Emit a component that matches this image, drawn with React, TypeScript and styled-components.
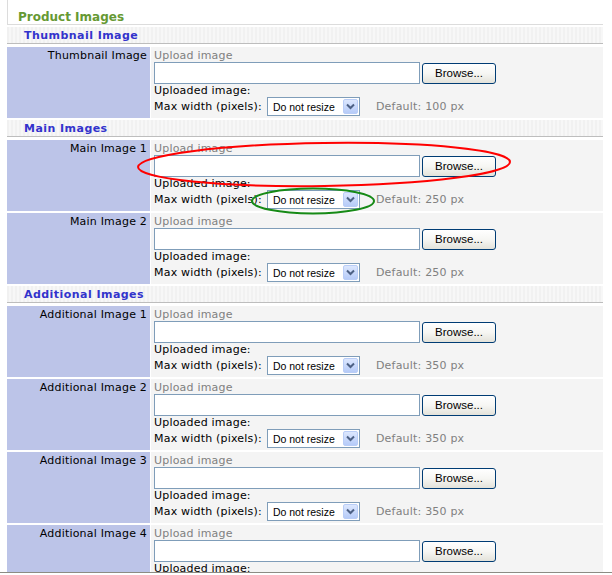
import styled, { createGlobalStyle } from 'styled-components';

const GlobalStyle = createGlobalStyle`
  html, body {
    margin: 0;
    padding: 0;
    background: #ffffff;
    overflow: hidden;
  }
  body {
    font-family: "DejaVu Sans", Verdana, sans-serif;
    font-size: 11px;
    letter-spacing: 0.2px;
    color: #000000;
  }
`;

interface IRow {
  label: string;
  defaultWidth: number;
}

interface ISection {
  title: string;
  rows: IRow[];
}

const sections: ISection[] = [
  {
    title: 'Thumbnail Image',
    rows: [{ label: 'Thumbnail Image', defaultWidth: 100 }],
  },
  {
    title: 'Main Images',
    rows: [
      { label: 'Main Image 1', defaultWidth: 250 },
      { label: 'Main Image 2', defaultWidth: 250 },
    ],
  },
  {
    title: 'Additional Images',
    rows: [1, 2, 3, 4].map((n) => ({
      label: `Additional Image ${n}`,
      defaultWidth: 350,
    })),
  },
];

const Root = styled.div`
  position: relative;
  width: 612px;
  height: 575px;
`;

const Page = styled.div`
  width: 596px;
  margin-left: 7px;
  display: flex;
  flex-direction: column;
  gap: 2px;
`;

const PageTitle = styled.div`
  border-left: 1px solid #dcdcdc;
  border-bottom: 1px solid #dcdcdc;
  padding: 10px 0 0 10px;
  line-height: 14px;
  font-size: 12px;
  letter-spacing: 0;
  font-weight: bold;
  color: #669933;
`;

const SectionHead = styled.div`
  margin-bottom: 1px;
  padding: 2px 0 0 17px;
  line-height: 14px;
  font-weight: bold;
  letter-spacing: 0.45px;
  color: #3333cc;
  border-bottom: 1px solid #bdbdbd;
  background: repeating-linear-gradient(
    90deg,
    #f1f1f1 0px,
    #f1f1f1 2px,
    #f7f7f7 2px,
    #f7f7f7 4px
  );
`;

const Row = styled.div`
  display: grid;
  grid-template-columns: 143px 1fr;
  column-gap: 1px;
`;

const Label = styled.div`
  background: #bcc4e8;
  text-align: right;
  padding: 2px 3px 0 0;
  line-height: 13px;
  white-space: nowrap;
`;

const Field = styled.div`
  background: #f4f4f4;
  padding: 2px 3px;
  display: flex;
  flex-direction: column;
`;

const Line = styled.div<{ $muted?: boolean }>`
  line-height: 13px;
  color: ${(p) => (p.$muted ? '#808080' : '#000000')};
  white-space: nowrap;
`;

const FileLine = styled.div`
  display: flex;
  align-items: center;
  gap: 2px;
  height: 22px;
`;

const FileBox = styled.div`
  box-sizing: border-box;
  width: 266px;
  height: 22px;
  background: #ffffff;
  border: 1px solid #7f9db9;
`;

const BrowseButton = styled.button`
  box-sizing: border-box;
  width: 74px;
  height: 21px;
  padding: 0;
  border: 1px solid #003c74;
  border-radius: 3px;
  background: linear-gradient(#ffffff 0%, #f6f6f3 50%, #e3e2da 100%);
  font-family: "Liberation Sans", Arial, sans-serif;
  font-size: 11.5px;
  letter-spacing: 0;
  color: #000000;
`;

const SizeLine = styled.div`
  display: flex;
  align-items: center;
  height: 19px;
  white-space: nowrap;
`;

const Select = styled.div`
  box-sizing: border-box;
  width: 93px;
  height: 19px;
  margin-left: 5px;
  border: 1px solid #7f9db9;
  background: #ffffff;
  display: flex;
  align-items: center;
  justify-content: space-between;
  padding: 0 1px 0 5px;
  font-family: "Liberation Sans", Arial, sans-serif;
  font-size: 10.5px;
  letter-spacing: 0;
`;

const DropArrow = styled.span`
  display: flex;
  align-items: center;
  justify-content: center;
  width: 15px;
  height: 15px;
  border-radius: 2px;
  background: linear-gradient(#dce7fe, #b6cbf8);
  border: 1px solid #b9cdf7;
  box-sizing: border-box;
`;

const DefaultNote = styled.span`
  margin-left: 16px;
  color: #808080;
`;

const Overlay = styled.svg`
  position: absolute;
  left: 0;
  top: 0;
  pointer-events: none;
`;

const StatusEdge = styled.div`
  position: fixed;
  left: 0;
  right: 0;
  top: 572px;
  height: 3px;
  border-top: 1px solid #8c8c84;
  background: #ffffff;
  box-sizing: border-box;
`;

const ImageRow = ({ row }: { row: IRow }) => (
  <Row>
    <Label>{row.label}</Label>
    <Field>
      <Line $muted>Upload image</Line>
      <FileLine>
        <FileBox />
        <BrowseButton>Browse...</BrowseButton>
      </FileLine>
      <Line>Uploaded image:</Line>
      <SizeLine>
        Max width (pixels):
        <Select>
          <span>Do not resize</span>
          <DropArrow>
            <svg width="9" height="7" viewBox="0 0 9 7">
              <path
                d="M1 1.5 L4.5 5 L8 1.5"
                fill="none"
                stroke="#4d6185"
                strokeWidth="2"
              />
            </svg>
          </DropArrow>
        </Select>
        <DefaultNote>Default: {row.defaultWidth} px</DefaultNote>
      </SizeLine>
    </Field>
  </Row>
);

const App = () => {
  return (
    <Root>
      <GlobalStyle />
      <Page>
        <PageTitle>Product Images</PageTitle>
        {sections.map((s) => (
          <div key={s.title} style={{ display: 'contents' }}>
            <SectionHead>{s.title}</SectionHead>
            {s.rows.map((r) => (
              <ImageRow key={r.label} row={r} />
            ))}
          </div>
        ))}
      </Page>
      <Overlay width="612" height="575" viewBox="0 0 612 575">
        <ellipse
          cx="324"
          cy="164.5"
          rx="186"
          ry="21.5"
          fill="none"
          stroke="#ff0000"
          strokeWidth="2"
          transform="rotate(-0.8 324 164.5)"
        />
        <ellipse
          cx="313"
          cy="201"
          rx="61"
          ry="12.5"
          fill="none"
          stroke="#168a16"
          strokeWidth="2"
        />
      </Overlay>
      <StatusEdge />
    </Root>
  );
};

export default App;
